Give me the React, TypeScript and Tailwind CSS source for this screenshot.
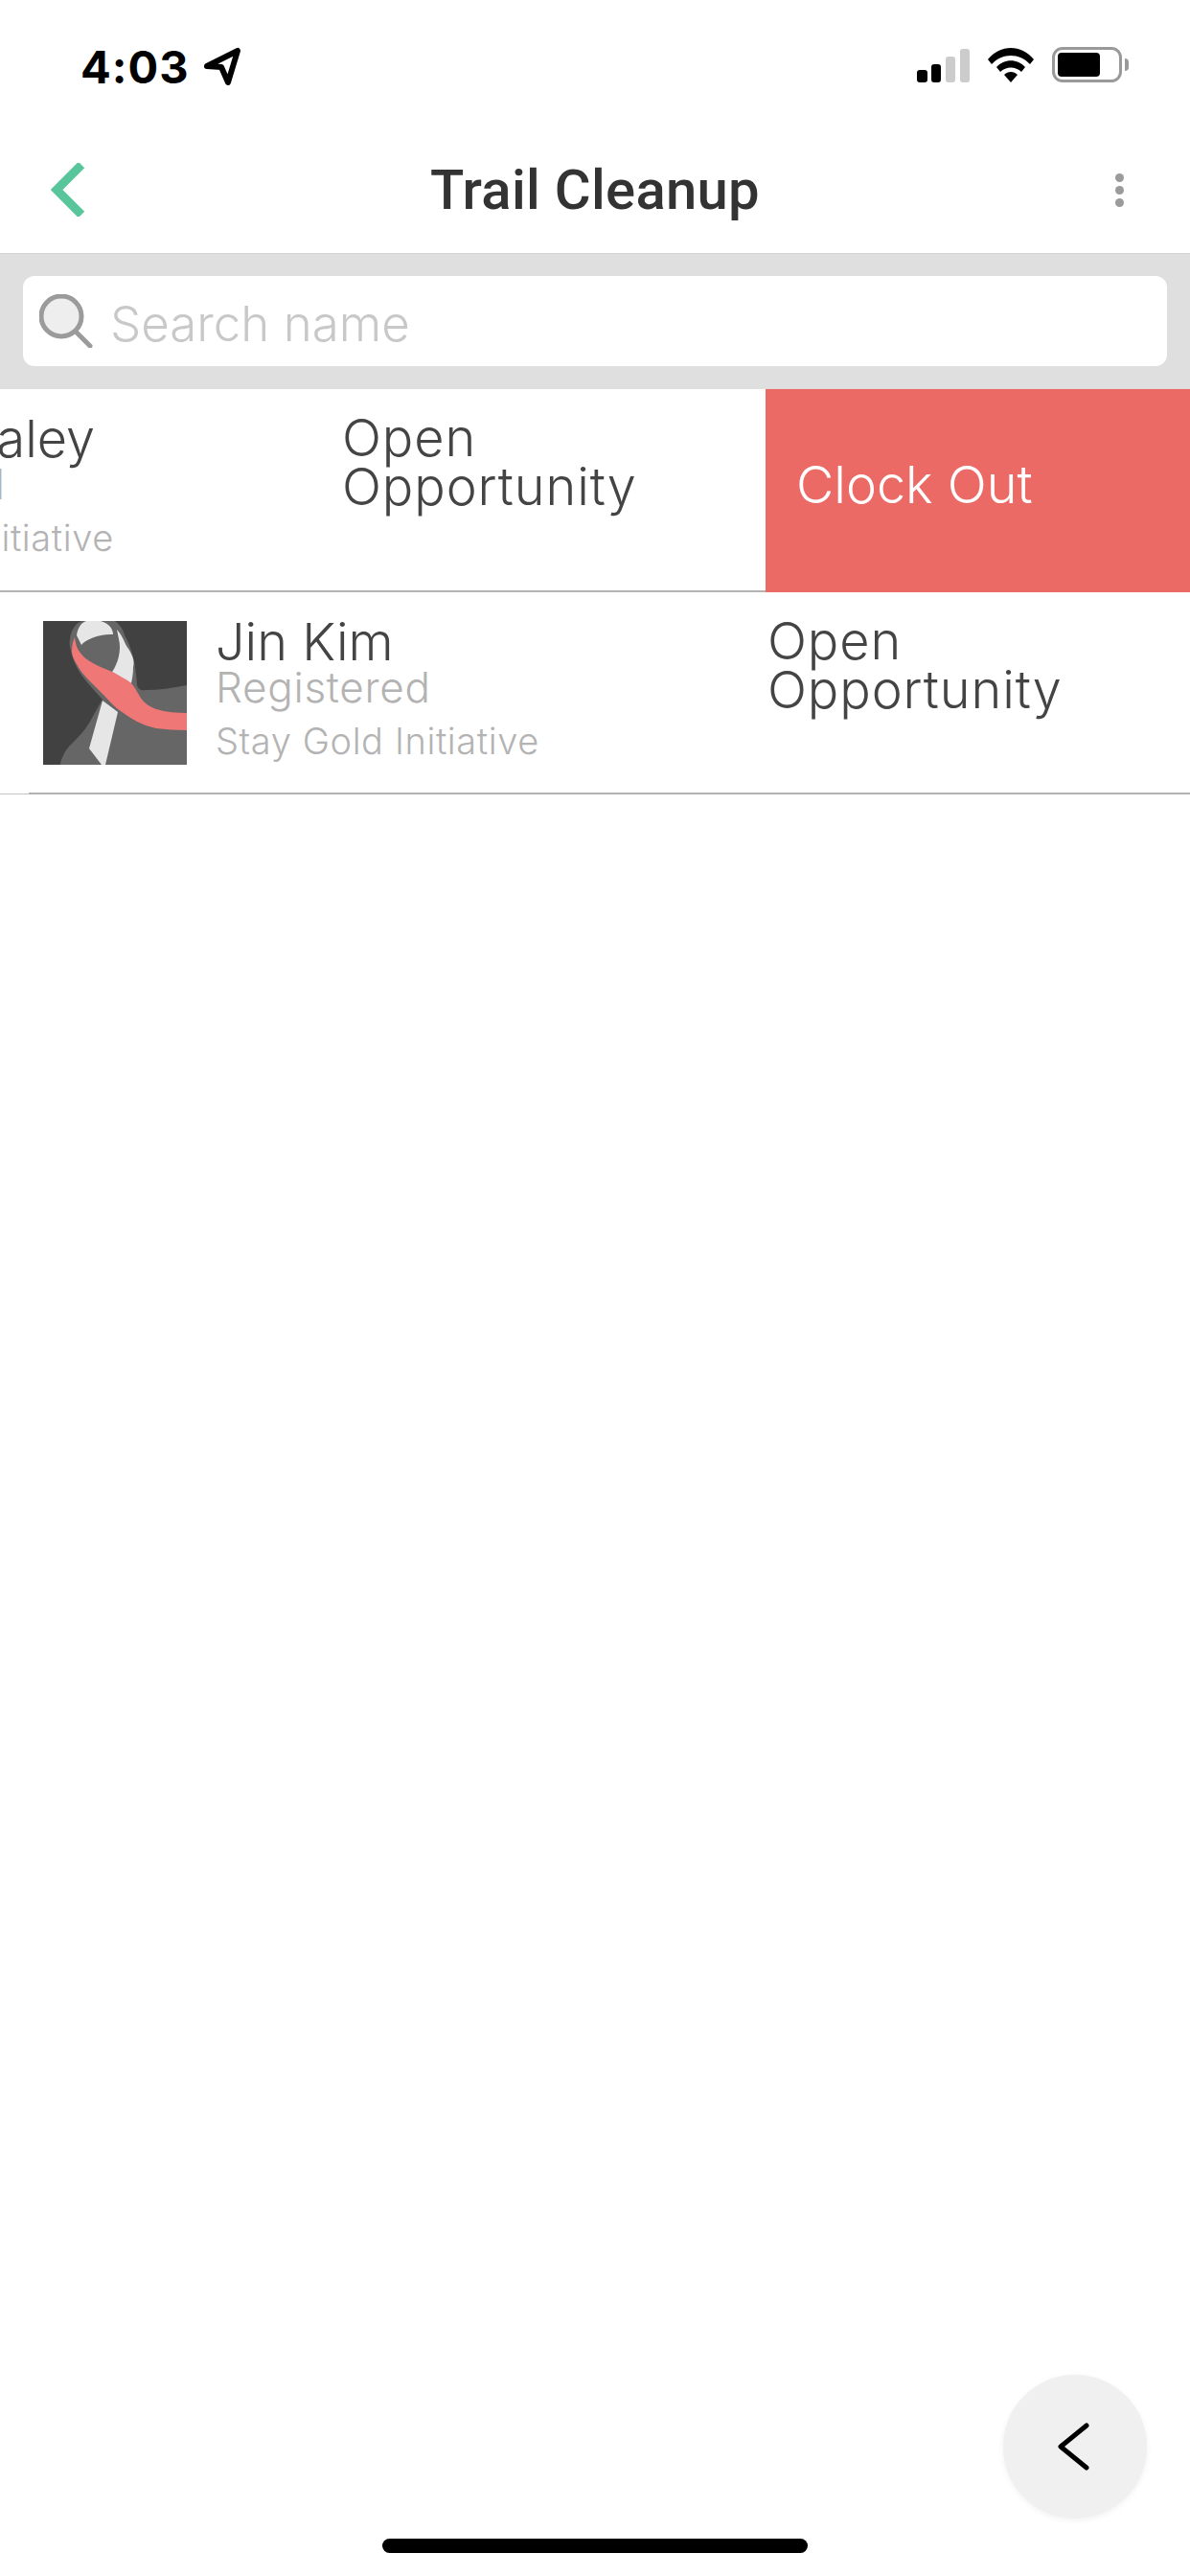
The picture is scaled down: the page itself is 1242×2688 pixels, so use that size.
const rowFont = "font-['Inter','Liberation_Sans',sans-serif] font-[350]";
const lightFont = "font-['Inter','Liberation_Sans',sans-serif] font-light";

function PersonRow({ name, className }: { name: string; className: string }) {
  return (
    <div className={`flex h-[210px] w-[1242px] shrink-0 items-start pt-[30px] pl-[45px] ${rowFont} ${className}`}>
      <svg width="150" height="150" viewBox="0 0 150 150" className="shrink-0">
        <rect width="150" height="150" fill="#414141" />
        <path d="M28 19C29 8 36 0 42 0H75C80 4 84 9 85 15C92 26 97 45 98 67C99 71 102 73 107 72C120 72 135 70 150 67V150H18C18 146 22 135 30 128C40 118 45 112 50 103C54 96 58 88 62 82C50 68 35 55 30 35C28 28 27 24 28 19Z" fill="#666666" />
        <path d="M35 15L40 25C44 19 60 13 73 14C73 9 70 3 60 0H45C39 2 36 8 35 15Z" fill="#e6e6e6" />
        <path d="M77 9C82 14 84 20 87 26C93 34 96 42 94 48C94 55 93 60 92 65L72 53C78 45 82 30 79 19Z" fill="#e6e6e6" />
        <path d="M62 83L78 95L65 150H61L48 133Z" fill="#e6e6e6" />
        <path d="M33 17C34 24 35 28 38 32C42 38 47 41 52 44C59 48 66 50 72 53C79 57 86 60 92 65C97 70 100 79 105 84C109 88 113 90 118 92C128 95 140 96 150 96V114C139 114 128 113 118 112C110 110 104 108 98 105C91 101 85 97 78 92C73 88 68 82 63 77C58 72 53 67 48 62C43 57 38 51 35 45C32 40 30 36 30 32C30 26 31 21 33 17Z" fill="#ef7876" />
      </svg>
      <div className="ml-[30px] flex w-[576px] shrink-0 flex-col">
        <div className="mt-[-4px] text-[54px] leading-[51px] text-[#444444]">{name}</div>
        <div className="text-[44px] leading-[44px] tracking-[0.7px] text-[#b3b3b3]">Registered</div>
        <div className="mt-[14px] text-[38px] leading-[40px] tracking-[0.6px] text-[#b3b3b3]">Stay Gold Initiative</div>
      </div>
      <div className="mt-[-5px] w-[330px] text-[54px] leading-[51px] tracking-[0.9px] text-[#444444]">Open<br />Opportunity</div>
    </div>
  );
}

export default function App() {
  return (
    <div className="relative flex h-[2688px] w-[1242px] flex-col overflow-hidden bg-white">
      <div className="flex h-[96px] shrink-0 items-start justify-between pl-[84px] pt-[49px] pr-[64px]">
        <div className="flex items-center">
          <span className="font-['Inter',sans-serif] text-[47px] leading-[38px] font-bold tracking-[1px] text-black">4:03</span>
          <svg width="42" height="42" viewBox="0 0 42 42" className="ml-[13px]">
            <path d="M5 20L37 4L27 37L20 21Z" fill="none" stroke="#000" strokeWidth="6" strokeLinejoin="round" />
          </svg>
        </div>
        <div className="flex items-start">
          <svg width="56" height="36" viewBox="0 0 56 36" className="mt-[1px]">
            <rect x="1" y="23" width="11" height="13" rx="3" fill="#000" />
            <rect x="16" y="17" width="10" height="19" rx="3" fill="#000" />
            <rect x="31" y="9" width="10" height="27" rx="3" fill="#cccccc" />
            <rect x="46" y="1" width="10" height="35" rx="3" fill="#cccccc" />
          </svg>
          <svg width="48" height="37" viewBox="0 0 48 37" className="ml-[19px]">
            <path d="M0 13C13 -3 35 -3 48 13L44 18C33 6 15 6 4 18Z" fill="#000" />
            <path d="M9 21C17 12 31 12 39 21L35 26C29 20 19 20 13 26Z" fill="#000" />
            <path d="M17 29C21 25 27 25 31 29L24 37Z" fill="#000" />
          </svg>
          <div className="ml-[19px] flex items-center">
            <div className="h-[37px] w-[73px] rounded-[11px] border-[3px] border-[#999999] p-[3px]">
              <div className="h-[25px] w-[44px] rounded-[4px] bg-black" />
            </div>
            <div className="ml-[3px] h-[13px] w-[4px] rounded-r-full bg-[#999999]" />
          </div>
        </div>
      </div>

      <div className="relative flex h-[168px] shrink-0 items-center justify-between pt-[36px] pl-[53px] pr-[69px]">
        <svg width="38" height="56" viewBox="0 0 38 56">
          <path d="M32 2L6 28L32 54" fill="none" stroke="#58c59a" strokeWidth="9" />
        </svg>
        <div className="absolute top-[68px] left-0 right-0 text-center font-['Roboto',sans-serif] text-[58px] leading-[68px] font-medium tracking-[0.3px] text-[#333333]">Trail Cleanup</div>
        <div className="flex flex-col gap-[4px]">
          <div className="size-[9px] rounded-full bg-[#9b9b9b]" />
          <div className="size-[9px] rounded-full bg-[#9b9b9b]" />
          <div className="size-[9px] rounded-full bg-[#9b9b9b]" />
        </div>
      </div>

      <div className="shrink-0 border-t border-[#d4d4d4] bg-[#dfdfdf] px-[24px] pt-[23px] pb-[24px]">
        <div className="flex h-[94px] items-center rounded-[12px] bg-white pl-[17px]">
          <svg width="56" height="56" viewBox="0 0 56 56" className="shrink-0">
            <circle cx="23" cy="23" r="21" fill="#eeeeee" stroke="#9b9b9b" strokeWidth="5" />
            <path d="M38 39L53 54" stroke="#9b9b9b" strokeWidth="5" strokeLinecap="round" />
          </svg>
          <span className={`mt-[5px] ml-[18px] text-[51px] leading-[60px] text-[#c8c8c8] ${rowFont}`}>Search name</span>
        </div>
      </div>

      <div className="relative h-[212px] shrink-0 overflow-hidden">
        <PersonRow name="Mary Healey" className="ml-[-444px]" />
        <div className="h-[2px] bg-[#b3b3b3]" />
        <div className="absolute inset-y-0 right-0 flex w-[443px] items-center bg-[#ec6a66] pb-[12px] pl-[32px]">
          <span className={`text-[54px] leading-[60px] text-white ${lightFont}`}>Clock Out</span>
        </div>
      </div>

      <div className="h-[212px] shrink-0">
        <PersonRow name="Jin Kim" className="" />
        <div className="mt-[-1px] flex items-end">
          <div className="h-px w-[30px] bg-[#c4c4c4]" />
          <div className="h-[2px] grow bg-[#b3b3b3]" />
        </div>
      </div>

      <button className="absolute top-[2478px] left-[1047px] flex size-[150px] items-center justify-center rounded-full bg-[#f0f0f0] shadow-[0_2px_6px_rgba(0,0,0,0.06)]">
        <svg width="34" height="50" viewBox="0 0 34 50" className="mr-[5px]">
          <path d="M31 3L4 25L31 47" fill="none" stroke="#000" strokeWidth="5" strokeLinecap="round" strokeLinejoin="round" />
        </svg>
      </button>
      <div className="absolute top-[2649px] left-[399px] h-[15px] w-[444px] rounded-full bg-black" />
    </div>
  );
}
